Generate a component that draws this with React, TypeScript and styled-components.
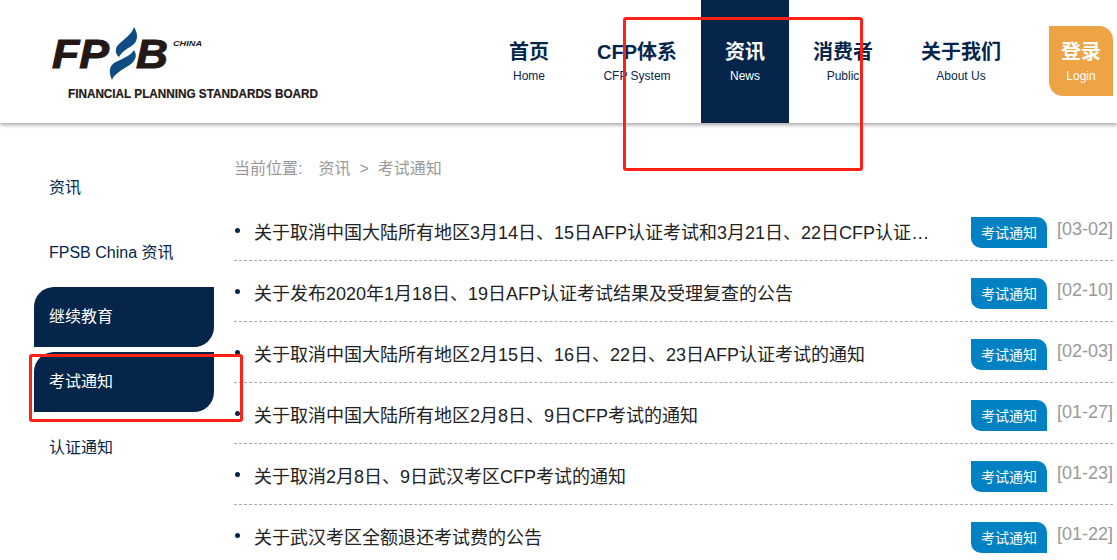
import styled, { createGlobalStyle } from "styled-components";

const navItems = [
  { cn: "首页", en: "Home" },
  { cn: "CFP体系", en: "CFP System" },
  { cn: "资讯", en: "News", active: true },
  { cn: "消费者", en: "Public" },
  { cn: "关于我们", en: "About Us" },
];

const sideItems = [
  { label: "资讯" },
  { label: "FPSB China 资讯" },
  { label: "继续教育", active: true },
  { label: "考试通知", active: true },
  { label: "认证通知" },
];

const notices = [
  { title: "关于取消中国大陆所有地区3月14日、15日AFP认证考试和3月21日、22日CFP认证考试的通知", date: "[03-02]" },
  { title: "关于发布2020年1月18日、19日AFP认证考试结果及受理复查的公告", date: "[02-10]" },
  { title: "关于取消中国大陆所有地区2月15日、16日、22日、23日AFP认证考试的通知", date: "[02-03]" },
  { title: "关于取消中国大陆所有地区2月8日、9日CFP考试的通知", date: "[01-27]" },
  { title: "关于取消2月8日、9日武汉考区CFP考试的通知", date: "[01-23]" },
  { title: "关于武汉考区全额退还考试费的公告", date: "[01-22]" },
];

const Logo = () => (
  <LogoSvg viewBox="0 0 270 80" aria-label="FPSB China">
    <LogoText
      x="0"
      y="41"
      fontSize="40"
      fontWeight="700"
      fontStyle="italic"
      stroke="#231815"
      strokeWidth="1"
      textLength="57"
      lengthAdjust="spacingAndGlyphs"
    >
      FP
    </LogoText>
    <path
      d="M82 0 C80 7 72 12 66 18 C63 21 63 27 67 30 C70 24 77 21 82 17 C86 13 86 6 82 0 Z"
      fill="#0f4c81"
    />
    <path
      d="M82 23 C79 29 69 32 62 36 C58 39 56 44 60 53 C62 47 70 43 76 39 C83 35 86 29 82 23 Z"
      fill="#0f4c81"
    />
    <LogoText
      x="84"
      y="41"
      fontSize="40"
      fontWeight="700"
      fontStyle="italic"
      stroke="#231815"
      strokeWidth="1"
      textLength="32"
      lengthAdjust="spacingAndGlyphs"
    >
      B
    </LogoText>
    <LogoText
      x="121"
      y="19"
      fontSize="8"
      fontWeight="700"
      fontStyle="italic"
      textLength="29"
      lengthAdjust="spacingAndGlyphs"
    >
      CHINA
    </LogoText>
    <LogoText
      x="16"
      y="71"
      fontSize="12"
      fontWeight="700"
      stroke="#231815"
      strokeWidth="0.2"
      textLength="250"
      lengthAdjust="spacingAndGlyphs"
    >
      FINANCIAL PLANNING STANDARDS BOARD
    </LogoText>
  </LogoSvg>
);

const App = () => {
  return (
    <>
      <GlobalStyle />
      <Header>
        <Logo />
        <Nav>
          {navItems.map((item) => (
            <NavItem key={item.en} $active={item.active}>
              <NavTitle>{item.cn}</NavTitle>
              <NavSub>{item.en}</NavSub>
            </NavItem>
          ))}
          <LoginButton>
            <NavTitle>登录</NavTitle>
            <NavSub>Login</NavSub>
          </LoginButton>
        </Nav>
      </Header>
      <Body>
        <Sidebar>
          {sideItems.map((item) => (
            <SideItem key={item.label} $active={item.active}>
              {item.label}
            </SideItem>
          ))}
        </Sidebar>
        <Main>
          <Breadcrumb>
            <CrumbLabel>当前位置:</CrumbLabel>
            <span>资讯</span>
            <span>&gt;</span>
            <span>考试通知</span>
          </Breadcrumb>
          <List>
            {notices.map((notice) => (
              <Row key={notice.date}>
                <Title>{notice.title}</Title>
                <Tag>考试通知</Tag>
                <DateText>{notice.date}</DateText>
              </Row>
            ))}
          </List>
        </Main>
      </Body>
      <NavFrame />
      <SideFrame />
    </>
  );
};

const GlobalStyle = createGlobalStyle`
  html, body {
    margin: 0;
    height: 560px;
    overflow: hidden;
    background: #fff;
    font-family: "Liberation Sans", "Noto Sans CJK SC", sans-serif;
  }
`;

const Header = styled.header`
  display: flex;
  justify-content: space-between;
  height: 123px;
  padding: 0 4px 0 52px;
  box-shadow: 0 2px 4px rgba(0, 0, 0, 0.35);
`;

const LogoSvg = styled.svg`
  width: 270px;
  height: 80px;
  margin-top: 27px;
`;

const LogoText = styled.text`
  font-family: "Liberation Sans", sans-serif;
  fill: #231815;
`;

const Nav = styled.nav`
  display: flex;
  align-items: flex-start;
`;

const NavItem = styled.div<{ $active?: boolean }>`
  display: flex;
  flex-direction: column;
  align-items: center;
  height: 123px;
  padding: 38px 24px 0;
  box-sizing: border-box;
  color: ${(p) => (p.$active ? "#fff" : "#05264a")};
  background: ${(p) => (p.$active ? "#05264a" : "transparent")};
`;

const NavTitle = styled.div`
  font-size: 20px;
  font-weight: 700;
  line-height: 28px;
`;

const NavSub = styled.div`
  font-size: 12px;
  line-height: 14px;
  margin-top: 3px;
`;

const LoginButton = styled.div`
  display: flex;
  flex-direction: column;
  align-items: center;
  width: 64px;
  height: 70px;
  margin: 26px 0 0 24px;
  padding-top: 12px;
  box-sizing: border-box;
  color: #fff;
  background: #eea345;
  border-radius: 0 14px 0 14px;
`;

const Body = styled.div`
  display: flex;
  gap: 20px;
  padding: 34px 4px 0 34px;
`;

const Sidebar = styled.aside`
  display: flex;
  flex-direction: column;
  gap: 5px;
  width: 180px;
  flex: none;
`;

const SideItem = styled.div<{ $active?: boolean }>`
  height: 60px;
  line-height: 60px;
  padding-left: 15px;
  font-size: 16px;
  color: ${(p) => (p.$active ? "#fff" : "#05264a")};
  background: ${(p) => (p.$active ? "#05264a" : "transparent")};
  border-radius: 20px 0 20px 0;
  ${(p) => (p.$active ? "" : "padding-top: 1px; box-sizing: border-box;")}
`;

const Main = styled.main`
  flex: 1;
  min-width: 0;
`;

const Breadcrumb = styled.div`
  display: flex;
  gap: 9px;
  height: 24px;
  line-height: 24px;
  margin-bottom: 19px;
  font-size: 16px;
  color: #999;
`;

const CrumbLabel = styled.span`
  margin-right: 7px;
`;

const List = styled.ul`
  list-style: none;
  margin: 0;
  padding: 0;
`;

const Row = styled.li`
  position: relative;
  display: flex;
  align-items: center;
  height: 61px;
  padding-top: 2px;
  box-sizing: border-box;
  border-bottom: 1px dashed #aaa;

  &::before {
    content: "";
    position: absolute;
    left: 1px;
    top: 28px;
    width: 5px;
    height: 5px;
    border-radius: 50%;
    background: #05264a;
  }
`;

const Title = styled.span`
  flex: 1;
  min-width: 0;
  margin-left: 20px;
  margin-right: 40px;
  font-size: 18px;
  color: #222;
  white-space: nowrap;
  overflow: hidden;
  text-overflow: ellipsis;
`;

const Tag = styled.span`
  flex: none;
  width: 76px;
  height: 31px;
  margin-top: 2px;
  line-height: 33px;
  text-align: center;
  font-size: 14px;
  color: #fff;
  background: #0081c4;
  border-radius: 0 10px 0 10px;
`;

const DateText = styled.span`
  flex: none;
  margin-left: 10px;
  margin-bottom: 3px;
  font-size: 18px;
  color: #999;
`;

const RedFrame = styled.div`
  position: absolute;
  box-sizing: border-box;
  border: 3px solid #ff2116;
  border-radius: 3px;
`;

const NavFrame = styled(RedFrame)`
  left: 623px;
  top: 17px;
  width: 240px;
  height: 154px;
`;

const SideFrame = styled(RedFrame)`
  left: 29px;
  top: 354px;
  width: 214px;
  height: 68px;
`;

export default App;
